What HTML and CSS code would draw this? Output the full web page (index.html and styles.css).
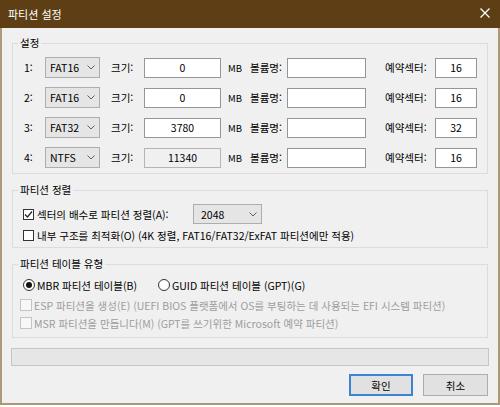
FILE: index.html
```html
<!DOCTYPE html>
<html lang="ko">
<head>
<meta charset="utf-8">
<title>파티션 설정</title>
<link rel="stylesheet" href="styles.css">
</head>
<body>
<div class="window">
  <div class="titlebar">
    <span class="title">파티션 설정</span>
    <svg class="close" width="10" height="10" viewBox="0 0 10 10"><path d="M0.5 0.5L9.5 9.5M9.5 0.5L0.5 9.5" stroke="#ffffff" stroke-width="1.3" fill="none"/></svg>
  </div>
  <div class="frame">
    <fieldset class="group g1">
      <legend>설정</legend>
      <div class="rows">
        <div class="prow">
          <span>1:</span>
          <div class="combo"><span>FAT16</span><svg class="chev" width="8" height="5" viewBox="0 0 8 5"><path d="M0.5 0.5L4 4L7.5 0.5" stroke="#606060" fill="none"/></svg></div>
          <span class="lbl-size">크기:</span>
          <div class="tbox">0</div>
          <span class="lbl-mb">MB</span>
          <span>볼륨명:</span>
          <div class="tbox"></div>
          <span class="lbl-res">예약섹터:</span>
          <div class="tbox">16</div>
        </div>
        <div class="prow">
          <span>2:</span>
          <div class="combo"><span>FAT16</span><svg class="chev" width="8" height="5" viewBox="0 0 8 5"><path d="M0.5 0.5L4 4L7.5 0.5" stroke="#606060" fill="none"/></svg></div>
          <span class="lbl-size">크기:</span>
          <div class="tbox">0</div>
          <span class="lbl-mb">MB</span>
          <span>볼륨명:</span>
          <div class="tbox"></div>
          <span class="lbl-res">예약섹터:</span>
          <div class="tbox">16</div>
        </div>
        <div class="prow">
          <span>3:</span>
          <div class="combo"><span>FAT32</span><svg class="chev" width="8" height="5" viewBox="0 0 8 5"><path d="M0.5 0.5L4 4L7.5 0.5" stroke="#606060" fill="none"/></svg></div>
          <span class="lbl-size">크기:</span>
          <div class="tbox">3780</div>
          <span class="lbl-mb">MB</span>
          <span>볼륨명:</span>
          <div class="tbox"></div>
          <span class="lbl-res">예약섹터:</span>
          <div class="tbox">32</div>
        </div>
        <div class="prow">
          <span>4:</span>
          <div class="combo"><span>NTFS</span><svg class="chev" width="8" height="5" viewBox="0 0 8 5"><path d="M0.5 0.5L4 4L7.5 0.5" stroke="#606060" fill="none"/></svg></div>
          <span class="lbl-size">크기:</span>
          <div class="tbox disabled">11340</div>
          <span class="lbl-mb">MB</span>
          <span>볼륨명:</span>
          <div class="tbox"></div>
          <span class="lbl-res">예약섹터:</span>
          <div class="tbox">16</div>
        </div>
      </div>
    </fieldset>

    <fieldset class="group g2">
      <legend>파티션 정렬</legend>
      <div class="align-row">
        <span class="check checked"><svg width="9" height="9" viewBox="0 0 9 9"><path d="M1 4.5L3.5 7L8 1.5" stroke="#222" stroke-width="1.2" fill="none"/></svg></span>
        <span class="align-label">섹터의 배수로 파티션 정렬(A):</span>
        <div class="combo combo-wide"><span>2048</span><svg class="chev" width="8" height="5" viewBox="0 0 8 5"><path d="M0.5 0.5L4 4L7.5 0.5" stroke="#606060" fill="none"/></svg></div>
      </div>
      <div class="opt-row">
        <span class="check"></span>
        <span class="opt-label">내부 구조를 최적화(O) (4K 정렬, FAT16/FAT32/ExFAT 파티션에만 적용)</span>
      </div>
    </fieldset>

    <fieldset class="group g3">
      <legend>파티션 테이블 유형</legend>
      <div class="radio-row">
        <span class="radio-item first"><span class="radio on"></span><span>MBR 파티션 테이블(B)</span></span>
        <span class="radio-item"><span class="radio"></span><span>GUID 파티션 테이블 (GPT)(G)</span></span>
      </div>
      <div class="opt-row dis first-dis">
        <span class="check off"></span>
        <span class="opt-label">ESP 파티션을 생성(E) (UEFI BIOS 플랫폼에서 OS를 부팅하는 데 사용되는 EFI 시스템 파티션)</span>
      </div>
      <div class="opt-row dis">
        <span class="check off"></span>
        <span class="opt-label">MSR 파티션을 만듭니다(M) (GPT를 쓰기위한 Microsoft 예약 파티션)</span>
      </div>
    </fieldset>

    <div class="progress"></div>

    <div class="buttons">
      <button class="btn default">확인</button>
      <button class="btn">취소</button>
    </div>
  </div>
</div>
</body>
</html>
```

FILE: styles.css
```css
html, body {
  margin: 0;
  padding: 0;
  background: #ffffff;
}
body {
  width: 500px;
  height: 407px;
  overflow: hidden;
  font-family: "Noto Sans CJK KR", "Noto Sans", sans-serif;
  font-size: 10.5px;
  color: #000;
}
.window {
  width: 500px;
  height: 405px;
  display: flex;
  flex-direction: column;
}
.titlebar {
  height: 28px;
  flex: none;
  background: #5e3f15;
  display: flex;
  align-items: center;
  justify-content: space-between;
  padding: 0 10px 0 8px;
  color: #fff;
}
.title {
  font-size: 11px;
  line-height: 14px;
  margin-top: -1px;
}
.close {
  display: block;
  margin-top: -2px;
}
.frame {
  flex: 1;
  background: #f0f0f0;
  border: 2px solid #ab9a74;
  border-top: 0;
  padding: 8px 10px 0 10px;
  display: flex;
  flex-direction: column;
}
.group {
  margin: 0;
  border: 1px solid #dcdcdc;
  padding: 7px 10px 5px 5px;
  min-width: 0;
}
.group legend {
  padding: 0 2px;
  line-height: 14px;
  height: 14px;
}
.rows {
  padding-left: 6px;
  display: flex;
  flex-direction: column;
  gap: 9px;
}
.prow {
  display: grid;
  grid-template-columns: 21px 55px 44px 77px 29px 37px 79px 69px 42px;
  align-items: center;
  height: 21px;
  white-space: nowrap;
}
.lbl-size { padding-left: 11px; }
.lbl-mb { padding-left: 7px; font-size: 9.5px; }
.lbl-res { padding-left: 19px; }
.combo {
  box-sizing: border-box;
  height: 21px;
  border: 1px solid #adadad;
  background: #e5e5e5;
  display: flex;
  align-items: center;
  justify-content: space-between;
  padding: 0 4px 0 4px;
}
.chev { display: block; }
.tbox {
  box-sizing: border-box;
  height: 20px;
  border: 1px solid #969696;
  background: #fff;
  text-align: center;
  line-height: 18px;
}
.tbox.disabled {
  background: #f0f0f0;
  border-color: #b5b5b5;
}
.g2 { margin-top: 9px; }
.g3 { margin-top: 9px; padding-top: 6px; padding-bottom: 7px; }
.align-row {
  display: flex;
  align-items: center;
  height: 20px;
  padding-left: 5px;
}
.check {
  box-sizing: border-box;
  width: 11px;
  height: 11px;
  border: 1px solid #333;
  background: #fff;
  display: flex;
  align-items: center;
  justify-content: center;
  flex: none;
}
.check svg { display: block; }
.align-label {
  width: 156px;
  margin-left: 3px;
}
.combo-wide {
  width: 69px;
  height: 20px;
  padding-left: 7px;
}
.opt-row {
  display: flex;
  align-items: center;
  height: 14px;
  margin-top: 4px;
  padding-left: 5px;
  white-space: nowrap;
}
.opt-label { margin-left: 3px; }
.radio-row {
  display: flex;
  align-items: center;
  height: 16px;
  padding-left: 5px;
}
.radio-item {
  display: flex;
  align-items: center;
}
.radio-item.first { width: 135px; }
.radio {
  box-sizing: border-box;
  width: 12px;
  height: 12px;
  border: 1px solid #333;
  border-radius: 50%;
  background: #fff;
  margin-right: 2px;
  display: flex;
  align-items: center;
  justify-content: center;
}
.radio.on::after {
  content: "";
  width: 6px;
  height: 6px;
  border-radius: 50%;
  background: #111;
}
.opt-row.dis {
  color: #9d9d9d;
  padding-left: 2px;
}
.opt-row.first-dis { margin-top: 5px; }
.check.off {
  border-color: #c4c4c4;
  background: #f7f7f7;
  width: 12px;
  height: 12px;
}
.opt-row.dis .opt-label { margin-left: 2px; }
.progress {
  margin: 10px -1px 0 -1px;
  height: 18px;
  box-sizing: border-box;
  border: 1px solid #c6c6c6;
  background: #e6e6e6;
}
.buttons {
  margin-top: 8px;
  display: flex;
  justify-content: flex-end;
  gap: 10px;
}
.btn {
  box-sizing: border-box;
  height: 22px;
  width: 65px;
  background: #e1e1e1;
  border: 1px solid #adadad;
  font-family: "Noto Sans CJK KR", "Noto Sans", sans-serif;
  font-size: 10.5px;
  color: #000;
  padding: 0;
  margin: 0;
}
.btn.default {
  width: 64px;
  border: 2px solid #3a86d4;
}
```
